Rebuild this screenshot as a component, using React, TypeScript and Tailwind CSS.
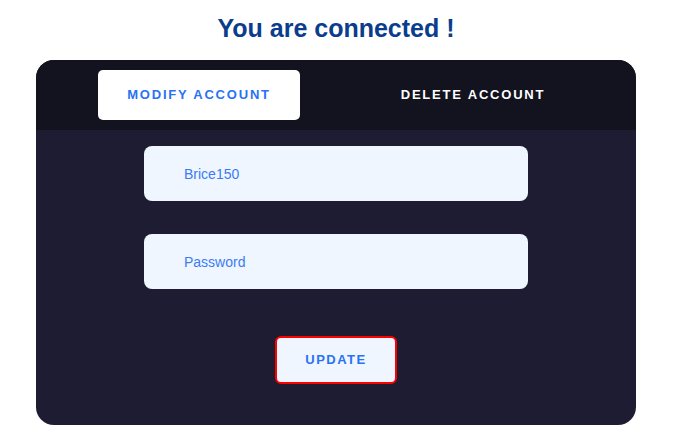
export default function App() {
  return (
    <div className="min-h-[435px] w-full bg-white font-['Liberation_Sans',Arial,sans-serif]">
      <div className="w-[672px]">
        <h1 className="pt-[12px] text-center text-[25px] font-bold leading-[32px] text-[#0a3d8c]">
          You are connected !
        </h1>

        <div className="mx-auto mt-[16px] w-[600px] overflow-hidden rounded-[18px] bg-[#1e1c33]">
          {/* Tabs */}
          <div className="flex justify-center gap-[72px] bg-[#13131f] py-[10px]">
            <button className="h-[50px] w-[202px] rounded-[5px] bg-white text-[13px] font-bold tracking-[1.8px] text-[#2a72f5]">
              MODIFY ACCOUNT
            </button>
            <button className="h-[50px] w-[202px] rounded-[5px] text-[13px] font-bold tracking-[1.8px] text-white">
              DELETE ACCOUNT
            </button>
          </div>

          {/* Form */}
          <div className="flex flex-col items-center pt-[16px] pb-[41px]">
            <input
              className="h-[55px] w-[384px] rounded-[8px] bg-[#eff6ff] pl-[40px] text-[14px] text-[#3b7cf5] outline-none placeholder:text-[#3b7cf5]"
              defaultValue="Brice150"
            />
            <input
              type="text"
              className="mt-[33px] h-[55px] w-[384px] rounded-[8px] bg-[#eff6ff] pl-[40px] text-[14px] text-[#3b7cf5] outline-none placeholder:text-[#3b7cf5]"
              placeholder="Password"
            />
            <button className="mt-[47px] h-[48px] w-[122px] rounded-[6px] border-2 border-[#ff0000] bg-[#eff6ff] text-[13px] font-bold tracking-[1.5px] text-[#2a72f5]">
              UPDATE
            </button>
          </div>
        </div>
      </div>
    </div>
  );
}
